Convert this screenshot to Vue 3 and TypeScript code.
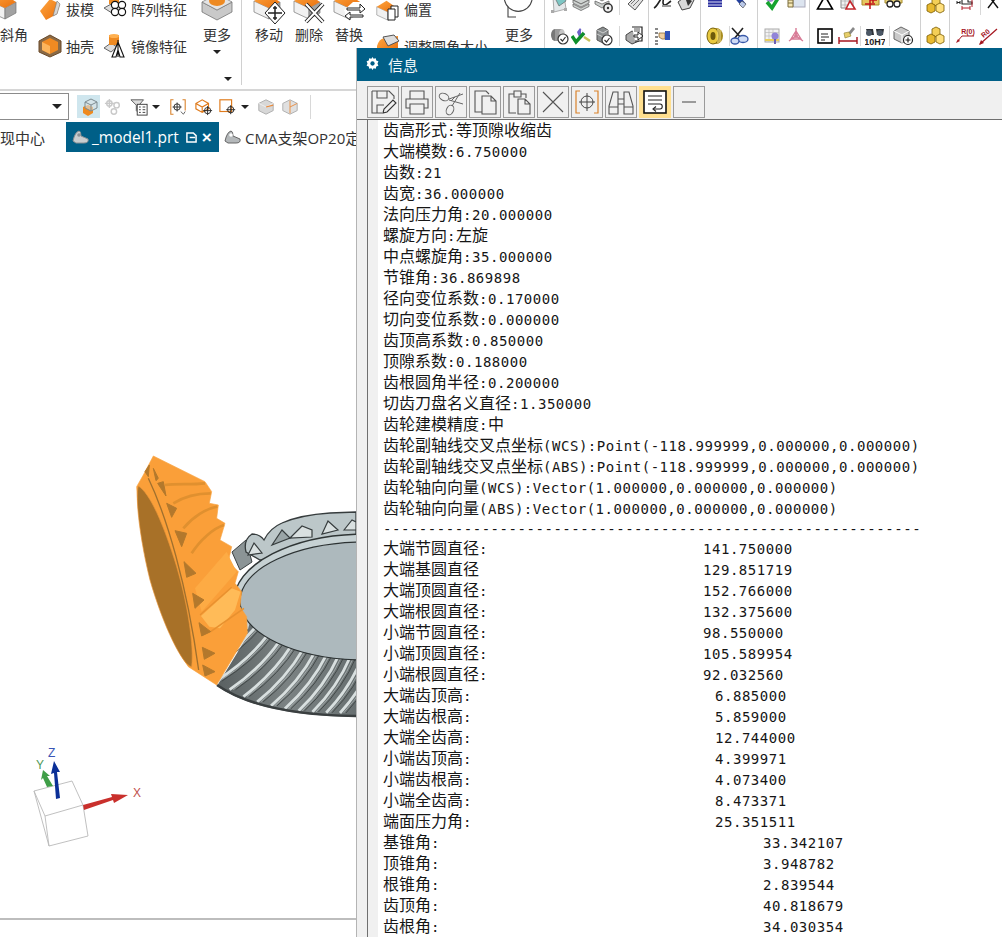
<script setup lang="ts">
interface Tok { s: string; cjk: boolean }
interface Mini { id?: string; ml: number; sep?: boolean }
interface MiniGroup { w: number; rows: Mini[][] }

const topLines: string[] = [
  '齿高形式:等顶隙收缩齿', '大端模数:6.750000', '齿数:21', '齿宽:36.000000',
  '法向压力角:20.000000', '螺旋方向:左旋', '中点螺旋角:35.000000', '节锥角:36.869898',
  '径向变位系数:0.170000', '切向变位系数:0.000000', '齿顶高系数:0.850000', '顶隙系数:0.188000',
  '齿根圆角半径:0.200000', '切齿刀盘名义直径:1.350000', '齿轮建模精度:中',
  '齿轮副轴线交叉点坐标(WCS):Point(-118.999999,0.000000,0.000000)',
  '齿轮副轴线交叉点坐标(ABS):Point(-118.999999,0.000000,0.000000)',
  '齿轮轴向向量(WCS):Vector(1.000000,0.000000,0.000000)',
  '齿轮轴向向量(ABS):Vector(1.000000,0.000000,0.000000)',
]
const dashes = '-'.repeat(60)
const table: [string, string, string][] = [
  ['大端节圆直径:', '141.750000', 'a'], ['大端基圆直径', '129.851719', 'a'],
  ['大端顶圆直径:', '152.766000', 'a'], ['大端根圆直径:', '132.375600', 'a'],
  ['小端节圆直径:', '98.550000', 'a'], ['小端顶圆直径:', '105.589954', 'a'],
  ['小端根圆直径:', '92.032560', 'a'], ['大端齿顶高:', '6.885000', 'b'],
  ['大端齿根高:', '5.859000', 'b'], ['大端全齿高:', '12.744000', 'b'],
  ['小端齿顶高:', '4.399971', 'b'], ['小端齿根高:', '4.073400', 'b'],
  ['小端全齿高:', '8.473371', 'b'], ['端面压力角:', '25.351511', 'b'],
  ['基锥角:', '33.342107', 'c'], ['顶锥角:', '3.948782', 'c'],
  ['根锥角:', '2.839544', 'c'], ['齿顶角:', '40.818679', 'c'],
  ['齿根角:', '34.030354', 'c'],
]
function tokens(line: string): Tok[] {
  const m = line.match(/[\u4e00-\u9fff]+|[^\u4e00-\u9fff]+/g) || []
  return m.map((s) => ({ s, cjk: /[\u4e00-\u9fff]/.test(s) }))
}

const miniGroups: MiniGroup[] = [
  { w: 104, rows: [
    [{ id: 'm1', ml: 4 }, { id: 'm2', ml: 2 }, { id: 'm3', ml: 3 }, { ml: 5, sep: true }, { id: 'm4', ml: 5 }],
    [{ id: 'n1', ml: 4 }, { id: 'n2', ml: 2 }, { id: 'n3', ml: 3 }, { ml: 5, sep: true }, { id: 'n4', ml: 5 }],
  ] },
  { w: 52, rows: [
    [{ id: 'm5', ml: 4 }, { id: 'm6', ml: 3 }],
    [{ id: 'n5', ml: 4 }],
  ] },
  { w: 57, rows: [
    [{ id: 'm7', ml: 4 }, { id: 'm8', ml: 4 }],
    [{ id: 'n6', ml: 4 }, { ml: 4, sep: true }, { id: 'n7', ml: -1 }],
  ] },
  { w: 52, rows: [
    [{ id: 'm9', ml: 5 }, { id: 'm10', ml: 3 }],
    [{ id: 'n8', ml: 5 }, { id: 'n9', ml: 3 }],
  ] },
  { w: 111, rows: [
    [{ id: 'm11', ml: 5 }, { id: 'm12', ml: 3 }, { id: 'm13', ml: 3 }, { id: 'm14', ml: 3 }],
    [{ id: 'n10', ml: 5 }, { id: 'n11', ml: 3 }, { ml: 2, sep: true }, { id: 'n12', ml: 4 }, { ml: 4, sep: true }, { id: 'n13', ml: 3 }],
  ] },
  { w: 29, rows: [
    [{ id: 'cubes', ml: 4 }],
    [{ id: 'cubes', ml: 4 }],
  ] },
  { w: 55, rows: [
    [{ id: 'm16', ml: 5 }, { ml: 5, sep: true }, { id: 'm17', ml: 2 }],
    [{ id: 'n15', ml: 5 }, { id: 'n16', ml: 3 }],
  ] },
]

// Gear tooth streaks on the lower grey flank, computed along the two rims.
const discY = (x: number) => 601 + 59 * Math.sqrt(Math.max(0, 1 - ((x - 366) / 126) ** 2))
const rimY = (x: number) => 716 - 31 * (Math.max(0, 356 - x) / 139) ** 3
const streaks = Array.from({ length: 11 }, (_, i) => {
  const t = i / 10
  const x0 = 256 + t * 118
  const x1 = x0 - (54 - t * 20)
  const y0 = discY(x0) - 3
  const y1 = rimY(x1) - 3
  const cx = (x0 + x1) / 2 + 6
  const cy = (y0 + y1) / 2 + 3
  return {
    light: `M${x0} ${y0}Q${cx} ${cy} ${x1} ${y1}`,
    thin: `M${x0 + 3.6} ${y0}Q${cx + 3.6} ${cy} ${x1 + 3.6} ${y1}`,
    dark: `M${x0 + 6} ${y0}Q${cx + 6} ${cy} ${x1 + 6} ${y1}`,
  }
})
</script>

<template>
  <div class="app">
    <svg class="defs" width="0" height="0">
      <defs>
        <linearGradient id="or" x1="0" y1="0" x2="1" y2="1"><stop offset="0" stop-color="#ffa640"/><stop offset="1" stop-color="#e96f0c"/></linearGradient>
        <linearGradient id="flank" x1="0" y1="0" x2="1" y2="0"><stop offset="0" stop-color="#596061"/><stop offset=".5" stop-color="#7b8283"/><stop offset="1" stop-color="#687071"/></linearGradient>
        <symbol id="fbox" viewBox="0 0 32 32">
          <path d="M1 13 16 20V31L1 24Z" fill="#f1f1f1" stroke="#777" stroke-width=".7"/>
          <path d="M16 20 27 14V25L16 31Z" fill="#a2a2a2" stroke="#777" stroke-width=".7"/>
          <path d="M1 13 14 5 27 14 16 20Z" fill="url(#or)"/>
        </symbol>
        <symbol id="m1" viewBox="0 0 20 20"><path d="M4 2 15 0 17 14 5 17Z" fill="#e4e8ea" stroke="#999" stroke-width=".8"/><path d="M6 3 13 -2 17 6 10 11Z" fill="#7dc6c4" stroke="#555" stroke-width=".6"/><rect x="2" y="15" width="3" height="3" fill="#aaa"/><rect x="15" y="13" width="3" height="3" fill="#aaa"/></symbol>
        <symbol id="m2" viewBox="0 0 20 20"><g fill="#cfd3d1" stroke="#666" stroke-width=".8"><path d="M2 5 10 1 18 5 10 9Z"/><path d="M2 9 10 13 18 9V11.500L10 15.500 2 11.500Z"/><path d="M2 5V8L10 12 18 8V5L10 9Z"/></g></symbol>
        <symbol id="m3" viewBox="0 0 20 20"><g fill="#c9cdcb" stroke="#666" stroke-width=".8"><path d="M1 2 8 -1 15 2 8 6Z"/><path d="M1 6 8 9 15 6V9L8 13 1 9Z"/></g><circle cx="14" cy="13" r="4.200" fill="#eee" stroke="#333" stroke-width="1.500"/><circle cx="14" cy="13" r="1.200" fill="#333"/></symbol>
        <symbol id="m4" viewBox="0 0 20 20"><path d="M3 9 11 1 17 -1 18 5 10 15Z" fill="#e4e4e4" stroke="#555"/><path d="M6 9 12 3M8 11 14 5" stroke="#777"/></symbol>
        <symbol id="m5" viewBox="0 0 20 20"><path d="M1 13C5 11 7 3 11 1 10 6 9 10 12 10 14 10 15 8 18 6" fill="none" stroke="#222" stroke-width="1.600"/><path d="M9 11 18 11" stroke="#999" stroke-width="2"/></symbol>
        <symbol id="m6" viewBox="0 0 20 20"><path d="M2 7 10 1 18 5 14 13 6 15Z" fill="#d8d8d8" stroke="#444"/><path d="M9 2 16 6 12 11Z" fill="#333"/></symbol>
        <symbol id="m7" viewBox="0 0 20 20"><rect x="3" y="-2" width="14" height="14" fill="#2b2f9d"/><path d="M3 1H17M3 4H17M3 7H17M3 10H17" stroke="#d9dcf5" stroke-width="1.200"/></symbol>
        <symbol id="m8" viewBox="0 0 20 20"><path d="M4 1 8 -2 17 9 13 12Z" fill="#24409f"/><path d="M13 6 17 9 14 13 10 9Z" fill="#b9c8e8" stroke="#444" stroke-width=".6"/></symbol>
        <symbol id="m9" viewBox="0 0 20 20"><circle cx="7" cy="3" r="4" fill="#a28bd6"/><path d="M4 7 9 13 17 0" fill="none" stroke="#16a32f" stroke-width="3.600"/></symbol>
        <symbol id="m10" viewBox="0 0 20 20"><rect x="7" y="2" width="12" height="10" fill="#dce4ef" stroke="#aab"/><path d="M2 2H7V12H2Z" fill="#f6e8b4" stroke="#7b6d3d"/><path d="M2 5H7M2 8H7" stroke="#7b6d3d"/><circle cx="11" cy="1" r="3" fill="#8e78cf"/></symbol>
        <symbol id="m11" viewBox="0 0 20 20"><path d="M10 1 17.500 14H2.500Z" fill="#fff" stroke="#000" stroke-width="1.600"/></symbol>
        <symbol id="m12" viewBox="0 0 20 20"><path d="M3-2H15V13H3Z" fill="#f1f1f1" stroke="#888"/><path d="M3 2H15M3 6H15M3 10H15M7-2V13M11-2V13" stroke="#aaa" stroke-width=".7"/><path d="M12 6 17 14H8Z" fill="#fff" stroke="#c2272d" stroke-width="1.600"/></symbol>
        <symbol id="m13" viewBox="0 0 20 20"><path d="M1-2H18V10H1Z" fill="#e6c660" stroke="#a98c2a"/><path d="M4 9H14M9 4V14M12 2V8M9 5H16" stroke="#c2151b" stroke-width="1.500"/></symbol>
        <symbol id="m14" viewBox="0 0 20 20"><path d="M1-2H18V8H1Z" fill="#e8d27a" stroke="#a98c2a"/><circle cx="6" cy="9" r="3" fill="#fff" stroke="#222" stroke-width="1.300"/><circle cx="13" cy="9" r="3" fill="#fff" stroke="#222" stroke-width="1.300"/></symbol>
        <symbol id="cubes" viewBox="0 0 20 20"><g stroke="#7a5b00" stroke-width=".8"><path d="M7 3 11 1 15 3V9L11 11 7 9Z" fill="#f4cf57"/><path d="M2 10 6 8 10 10V16L6 18 2 16Z" fill="#e8b92f"/><path d="M11 10 15 8 19 10V16L15 18 11 16Z" fill="#ffe07d"/></g></symbol>
        <symbol id="m16" viewBox="0 0 20 20"><path d="M7 7V1H13V7H17V9H7Z" fill="#fff" stroke="#222" stroke-width="1.100"/><path d="M2 6V9M5 6V9M2 7.500H5" stroke="#222"/><path d="M17 1V12M7 13H15M7 11V15M15 11V15" stroke="#b3202c"/></symbol>
        <symbol id="m17" viewBox="0 0 20 20"><path d="M5 0 15 13M15 0 5 13" stroke="#111" stroke-width="1.400"/></symbol>
        <symbol id="n1" viewBox="0 0 20 20"><ellipse cx="6" cy="9" rx="4" ry="6" fill="#777"/><rect x="6" y="3" width="7" height="12" fill="#9a9a9a"/><ellipse cx="13" cy="9" rx="3" ry="6" fill="#c5c5c5"/><circle cx="14" cy="13" r="5" fill="#fff" stroke="#333" stroke-width="1.200"/><path d="M11.500 13 13.500 15 16.500 11" fill="none" stroke="#333" stroke-width="1.200"/></symbol>
        <symbol id="n2" viewBox="0 0 20 20"><path d="M9 2 14 8 8 11 6 6Z" fill="#6d63c9"/><path d="M10 3 13 7 10 8Z" fill="#fff"/><path d="M1 10 5 16 13 7" fill="none" stroke="#0e8f2a" stroke-width="3.400"/><path d="M13 11 19 15" stroke="#c7c258" stroke-width="2.500"/></symbol>
        <symbol id="n3" viewBox="0 0 20 20"><path d="M3 4 9 1 14 4V14L9 17 3 14Z" fill="#8b8f90" stroke="#555"/><path d="M3 4 9 7 14 4M3 8 9 11 14 8" fill="none" stroke="#ddd" stroke-width=".8"/><circle cx="13" cy="14" r="5" fill="#fff" stroke="#333" stroke-width="1.200"/><path d="M10.500 14 12.500 16 15.500 12" fill="none" stroke="#333" stroke-width="1.200"/></symbol>
        <symbol id="n4" viewBox="0 0 20 20"><path d="M1 9 7 5 14 8V15L7 18 1 14Z" fill="#aaa" stroke="#444"/><path d="M7 1H17V15H10" fill="#fff" stroke="#222" stroke-width="1.200"/><path d="M9 9H13V6L18 10 13 14V11H9Z" fill="#fff" stroke="#222"/><path d="M9 3H15M9 5H15" stroke="#555"/></symbol>
        <symbol id="n5" viewBox="0 0 20 20"><path d="M2 3H5M2 7H5M2 11H5M2 15H5M2 18H5" stroke="#111"/><path d="M6 7H12V13H9L6 11Z" fill="#f2d0a0" stroke="#8a6a3a" stroke-width=".8"/><rect x="12" y="5" width="5" height="9" fill="#3153b8"/></symbol>
        <symbol id="n6" viewBox="0 0 20 20"><ellipse cx="11" cy="10" rx="7" ry="8" fill="#a88c20"/><ellipse cx="8" cy="10" rx="6" ry="8" fill="#e8c93f" stroke="#77620f"/><ellipse cx="8" cy="10" rx="2.500" ry="4" fill="#6e5b0c"/><path d="M13 3V17M15 4V16" stroke="#f2e08c"/></symbol>
        <symbol id="n7" viewBox="0 0 20 20"><path d="M3 2 14 14M14 2 5 13" stroke="#222" stroke-width="1.600"/><ellipse cx="14" cy="13" rx="5" ry="3.500" fill="#cfdcf5" stroke="#3858a8" stroke-width="1.300"/><ellipse cx="6" cy="15" rx="4" ry="3" fill="#cfdcf5" stroke="#3858a8" stroke-width="1.300"/></symbol>
        <symbol id="n8" viewBox="0 0 20 20"><rect x="2" y="3" width="14" height="13" fill="#f2f2f2" stroke="#aaa"/><path d="M2 6.500H16M2 10H16M6 3V16M10 3V16" stroke="#bbb" stroke-width=".7"/><path d="M2 14H16" stroke="#e9cf5a" stroke-width="2"/><circle cx="12" cy="10" r="3.500" fill="#9184d8"/><path d="M12 13V18" stroke="#6c60b5" stroke-width="2"/></symbol>
        <symbol id="n9" viewBox="0 0 20 20"><path d="M10 2V10M10 10 3 15M10 10 17 15M5 13 15 13 10 5Z" fill="none" stroke="#d87b96" stroke-width="1.400"/><circle cx="10" cy="10" r="2" fill="#d87b96"/></symbol>
        <symbol id="n10" viewBox="0 0 20 20"><rect x="3" y="3" width="14" height="14" fill="#fff" stroke="#000" stroke-width="1.600"/><path d="M6 8H13M6 11H14M6 14H10" stroke="#222"/></symbol>
        <symbol id="n11" viewBox="0 0 20 20"><path d="M10 7 15 1 17 3 12 9Z" fill="#888"/><path d="M6 7 11 6 13 10 7 12Z" fill="#e7cf6b" stroke="#8a7a2a" stroke-width=".6"/><path d="M1 11V18M19 11V18M1 15H19" stroke="#a5161f" stroke-width="1.400"/></symbol>
        <symbol id="n12" viewBox="0 0 20 20"><path d="M1 3H8L9 9H3ZM11 3H19L18 9H12Z" fill="#2c3036"/><circle cx="4" cy="7" r="3" fill="#4b5765"/><circle cx="15" cy="7" r="3" fill="#4b5765"/><text x="10" y="19" font-size="9" font-family="Liberation Sans" font-weight="700" text-anchor="middle" fill="#222">10H7</text></symbol>
        <symbol id="n13" viewBox="0 0 20 20" overflow="visible"><path d="M1 5 8 1 16 5V13L9 17 1 13Z" fill="#c9c9c9" stroke="#666"/><path d="M1 5 9 9 16 5M9 9V17" fill="none" stroke="#fff"/><circle cx="15" cy="14" r="4.500" fill="#fff" stroke="#222" stroke-width="1.200"/><path d="M12.500 14H17.500M15 11.500V16.500" stroke="#222" stroke-width="1.200"/></symbol>
        <symbol id="n15" viewBox="0 0 20 20"><text x="13" y="8" font-size="7" font-weight="700" font-family="Liberation Sans" text-anchor="middle" fill="#a5161f">R(0)</text><path d="M2 16 7 10H19" fill="none" stroke="#a5161f"/><path d="M1 17 5 15 3 13Z" fill="#a5161f"/></symbol>
        <symbol id="n16" viewBox="0 0 20 20"><path d="M2 18 19 3" stroke="#a5161f" stroke-width="1.200"/><path d="M1 19 6 17 3 14Z" fill="#a5161f"/><text x="9" y="9" font-size="7" font-weight="700" font-family="Liberation Sans" text-anchor="middle" transform="rotate(-40 9 9)" fill="#a5161f">R0</text></symbol>
      </defs>
    </svg>

    <header class="ribbon">
      <section class="group features">
        <div class="vtool chamfer">
          <svg class="big" viewBox="0 0 32 32"><use href="#fbox"/></svg>
          <span class="rlabel">斜角</span>
        </div>
        <div class="hcol col-b">
          <div class="htool"><svg class="mid" viewBox="0 0 24 24"><path d="M2 14 12 2 22 7 19 17 8 23Z" fill="url(#or)"/><path d="M19 4 22 7 19 17 15 19Z" fill="#d5d5d5" stroke="#777" stroke-width=".6"/></svg><span class="rlabel">拔模</span></div>
          <div class="htool"><svg class="mid" viewBox="0 0 24 24"><path d="M12 1 23 7V18L12 23 1 18V7Z" fill="#8a6a46" stroke="#6a4a2a"/><path d="M12 4 20 8V16L12 20 4 16V8Z" fill="#f08a22"/><path d="M4 8 12 12V20L4 16Z" fill="#fdb55c"/></svg><span class="rlabel">抽壳</span></div>
        </div>
        <div class="hcol col-c">
          <div class="htool"><svg class="mid" viewBox="0 0 24 24"><path d="M1 11 10 6 22 12 12 18Z" fill="#ddd" stroke="#666"/><rect x="6" y="-4" width="10" height="11" fill="#ee8a22"/><g fill="#fff" stroke="#111" stroke-width="1.200"><circle cx="12" cy="8" r="3.600"/><circle cx="19" cy="8" r="3.600"/><circle cx="12" cy="15" r="3.600"/><circle cx="19" cy="15" r="3.600"/></g></svg><span class="rlabel">阵列特征</span></div>
          <div class="htool"><svg class="mid" viewBox="0 0 24 24"><path d="M1 14 8 9 14 13 8 18Z" fill="#ddd" stroke="#666"/><rect x="6" y="1" width="10" height="10" fill="#ee8a22"/><ellipse cx="11" cy="2" rx="5" ry="2" fill="#ffb04f"/><path d="M15 6V23M15 8 9 23H13L15 16ZM15 8 21 23H17L15 16Z" fill="#fff" stroke="#111" stroke-width="1.100"/></svg><span class="rlabel">镜像特征</span></div>
        </div>
        <div class="vtool more">
          <svg class="big" viewBox="0 0 32 32"><path d="M1 14 16 22 31 14V24L16 32 1 24Z" fill="#c9c9c9" stroke="#666" stroke-width=".7"/><path d="M1 14 16 6 31 14 16 22Z" fill="#e4e4e4" stroke="#777" stroke-width=".7"/><ellipse cx="16" cy="13" rx="8" ry="5" fill="#ee8a22"/></svg>
          <span class="rlabel">更多</span>
          <span class="caret"></span>
        </div>
        <span class="caret launcher"></span>
      </section>

      <section class="group direct">
        <div class="vtool move">
          <svg class="big" viewBox="0 0 32 32"><use href="#fbox"/><path d="M22 14 32 25 22 36 12 25Z" fill="#fff" stroke="#222"/><path d="M22 18V32M15 25H29M20 20H24M20 30H24" stroke="#222" stroke-width="1.500"/></svg>
          <span class="rlabel">移动</span>
        </div>
        <div class="vtool move">
          <svg class="big" viewBox="0 0 32 32"><use href="#fbox"/><path d="M13 16 30 34M30 16 13 34" stroke="#222" stroke-width="4"/><path d="M13 16 30 34M30 16 13 34" stroke="#fff" stroke-width="2"/></svg>
          <span class="rlabel">删除</span>
        </div>
        <div class="vtool move">
          <svg class="big" viewBox="0 0 32 32"><use href="#fbox"/><path d="M20 14 32 14 32 28 14 30 11 22Z" fill="#fff"/><path d="M14 20H27V16L32 21 27 25V22H14ZM30 27H17V24L12 28 17 32V29H30Z" fill="#fff" stroke="#222"/></svg>
          <span class="rlabel">替换</span>
        </div>
        <div class="hcol col-o">
          <div class="htool"><svg class="mid" viewBox="0 0 24 24"><use href="#fbox" width="24" height="24"/><path d="M15 9H22V20H15Z" fill="#fff" stroke="#222"/><path d="M12 12H19V23H12Z" fill="#fff" stroke="#222"/></svg><span class="rlabel">偏置</span></div>
          <div class="htool"><svg class="mid" viewBox="0 0 24 24"><path d="M1 12Q3 5 8 4L22 2 22 14 10 20 1 18Z" fill="url(#or)"/><path d="M7 3 18 1 23 7 12 12Z" fill="#ddd" stroke="#555"/></svg><span class="rlabel wide">调整圆角大小</span></div>
        </div>
        <div class="vtool more2">
          <svg class="big" viewBox="0 0 32 32"><path d="M1.500 12A14 14 0 0 0 29 12" fill="none" stroke="#444" stroke-width="1.100"/><path d="M5 19V29H13" fill="none" stroke="#444" stroke-width="1.100"/></svg>
          <span class="rlabel">更多</span>
        </div>
      </section>

      <section v-for="(g, gi) in miniGroups" :key="gi" class="minigroup" :style="{ width: g.w + 'px' }">
        <div v-for="(r, ri) in g.rows" :key="ri" class="minirow">
          <template v-for="(it, ii) in r" :key="ii">
            <i v-if="it.sep" class="minisep" :style="{ marginLeft: it.ml + 'px' }"></i>
            <svg v-else class="mini" viewBox="0 0 20 20" :style="{ marginLeft: it.ml + 'px' }"><use :href="'#' + it.id"/></svg>
          </template>
        </div>
      </section>
    </header>

    <nav class="qbar">
      <div class="combo"><span class="caret"></span></div>
      <button class="qbtn on"><svg viewBox="0 0 20 20"><path d="M4 10 9 8 14 10V16L9 19 4 16Z" fill="#ef8a1f"/><path d="M6 5 12 2 18 5V11L12 14 6 11Z" fill="#d9e3e6" fill-opacity=".6" stroke="#7d8b90"/><path d="M6 5 12 8 18 5M12 8V14" fill="none" stroke="#7d8b90"/></svg></button>
      <svg class="qicon" viewBox="0 0 20 20"><g fill="none" stroke="#c9c9c9" stroke-width="1.600"><circle cx="6" cy="6" r="3"/><circle cx="14" cy="8" r="3"/><circle cx="11" cy="15" r="3"/><path d="M1 6H11M6 1V11"/></g></svg>
      <svg class="qicon filter" viewBox="0 0 20 20"><path d="M1 2H15L10 8V17L7 14V8Z" fill="#ddd" stroke="#555"/><rect x="8" y="7" width="11" height="12" fill="#fff" stroke="#333"/><path d="M10 10H12M14 10H17M10 13H12M14 13H17M10 16H12M14 16H17" stroke="#333"/></svg>
      <span class="caret q1"></span>
      <svg class="qicon sel" viewBox="0 0 20 20"><path d="M5 2H2V18H5M15 2H18V14" fill="none" stroke="#d9822b" stroke-width="1.200"/><circle cx="9" cy="10" r="3.500" fill="none" stroke="#222"/><path d="M4 10H14M9 5V15" stroke="#222"/><path d="M13 15 16 18 18 15" fill="none" stroke="#555"/></svg>
      <svg class="qicon sel2" viewBox="0 0 20 20"><path d="M1 6 8 2 15 6V12L8 16 1 12ZM1 6 8 10 15 6M8 10V16" fill="#fff" stroke="#e07b1c" stroke-width="1.300"/><circle cx="14" cy="14" r="3.500" fill="none" stroke="#222"/><path d="M9 14H19M14 9V19" stroke="#222"/></svg>
      <svg class="qicon sel3" viewBox="0 0 20 20"><rect x="1" y="2" width="13" height="13" fill="#fff" stroke="#e07b1c" stroke-width="1.300"/><circle cx="13" cy="13" r="3.500" fill="none" stroke="#222"/><path d="M8 13H18M13 8V18" stroke="#222"/></svg>
      <span class="caret q2"></span>
      <svg class="qicon sel4" viewBox="0 0 20 20"><path d="M2 6 10 2 18 6V14L10 18 2 14Z" fill="#d8d8d8" stroke="#aaa"/><path d="M2 6 10 10 18 6" fill="none" stroke="#f0f0f0"/><path d="M10 10 18 8" stroke="#e98a3b" stroke-width="1.400"/></svg>
      <svg class="qicon sel5" viewBox="0 0 20 20"><path d="M2 6 10 2 18 6V14L10 18 2 14Z" fill="#e0e0e0" stroke="#aaa"/><path d="M10 3V17M10 10 18 6" stroke="#e98a3b"/></svg>
      <i class="qsep"></i>
    </nav>

    <div class="tabs">
      <span class="tab first">现中心</span>
      <span class="tab active">
        <svg class="tabicon" viewBox="0 0 18 18"><path d="M1 13Q3 4 7 3 9 3 9 8L16 11Q17 15 12 15H4Z" fill="#c9cdcf" stroke="#8b9094"/><circle cx="7" cy="7" r="1.800" fill="#8b9094"/></svg>
        <span class="tabtext">_model1.prt</span>
        <svg class="tabsave" viewBox="0 0 12 12"><path d="M1 1H8L11 4V11H1Z" fill="none" stroke="#fff" stroke-width="1.600"/><path d="M4 6H10" stroke="#fff" stroke-width="1.600"/></svg>
        <b class="tabclose">×</b>
      </span>
      <span class="tab other">
        <svg class="tabicon" viewBox="0 0 18 18"><path d="M1 13Q3 4 7 3 9 3 9 8L16 11Q17 15 12 15H4Z" fill="#b4b8ba" stroke="#666"/><circle cx="7" cy="7" r="1.800" fill="#fff"/></svg>
        <span class="tabtext dark">CMA支架OP20定位</span>
      </span>
    </div>

    <main class="viewport">
      <svg class="scene" viewBox="0 152 356 766" preserveAspectRatio="xMinYMin slice">
        <!-- grey gear -->
        <path d="M232 552 246 540 252 562 240 570Z" fill="#8b9496" stroke="#3b4142"/>
        <path d="M246 552Q243 540 252 534 260 534 264 540 270 528 282 523 300 515 330 513L356 512V560H260Z" fill="#bcc7c9" stroke="#363c3d" stroke-width="1.300"/>
        <g fill="#d9e0e0" stroke="#363c3d" stroke-width="1.200">
          <path d="M248 555 254 543 262 553Z"/>
          <path d="M272 545 282 530 290 538Z" fill="#9aa5a7"/>
          <path d="M290 538 302 526 312 530 312 537Z"/>
          <path d="M322 534 328 521 338 530Z"/>
          <path d="M344 530 352 520 356 522V530Z"/>
        </g>
        <ellipse cx="366" cy="601" rx="132" ry="67" fill="#c6d1d3" stroke="#2f3535" stroke-width="1.500"/>
        <path d="M217 686C240 702 280 716 356 717V622H250L245 640Z" fill="url(#flank)"/>
        <g fill="none">
          <template v-for="(s, i) in streaks" :key="i">
            <path :d="s.dark" stroke="#434949" stroke-width="1"/>
            <path :d="s.thin" stroke="#aeb6b6" stroke-width=".8"/>
            <path :d="s.light" stroke="#d8dfdf" stroke-width="2.800"/>
          </template>
        </g>
        <path d="M217 685C240 701 280 715 356 716" fill="none" stroke="#3a3f40" stroke-width="2.500"/>
        <ellipse cx="366" cy="601" rx="126" ry="59" fill="#adb9bd" stroke="#2c3233" stroke-width="1.200"/>
        <!-- orange gear, traced in a 3× frame -->
        <g transform="translate(120 440) scale(.3333)">
          <path d="M100 48 255 125 275 155 268 190 295 195 290 235 315 250 300 300 335 320 325 365 355 395 345 430 365 455 360 500 380 530 382 580 290 735 205 680C120 560 60 330 50 140L70 105Z" fill="#fa9f39" stroke="#f8a544" stroke-width="2" stroke-linejoin="round"/>
          <g fill="none" stroke="#e0902f" stroke-width="8">
            <path d="M135 135C170 130 215 135 255 130"/>
            <path d="M160 190C200 165 240 160 272 160"/>
            <path d="M190 265C220 230 260 205 292 200"/>
            <path d="M215 340C240 300 280 265 312 255"/>
          </g>
          <path d="M225 445 320 335 350 395 245 515Z" fill="#fdab44"/>
          <path d="M243 528 335 445 362 455 345 510 300 565 268 560Z" fill="#ffbb58"/>
          <path d="M240 525 335 442" stroke="#e8912f" stroke-width="4" fill="none"/>
          <path d="M272 575 372 505" stroke="#e8912f" stroke-width="5" fill="none"/>
          <path d="M55 138C90 160 130 250 170 380 205 500 222 620 215 680 190 680 130 560 90 420 60 300 45 170 55 138Z" fill="#a87128" stroke="#e8953a" stroke-width="2"/>
          <path d="M85 115C140 230 200 430 236 690" fill="none" stroke="#a0702e" stroke-width="4"/>
          <g fill="#b3782c" stroke="#b3782c" stroke-width="3" stroke-linejoin="round">
            <path d="M75 95 88 75 85 110Z"/><path d="M100 85 115 115 108 122Z"/>
            <path d="M113 130 130 125 138 168Z"/><path d="M140 190 170 205 155 232Z"/>
            <path d="M165 272 200 280 185 320Z"/><path d="M192 365 228 400 200 412Z"/>
            <path d="M218 460 252 480 225 505Z"/><path d="M237 548 272 575 245 588Z"/>
            <path d="M247 622 285 640 253 658Z"/><path d="M248 675 285 695 255 708Z"/>
          </g>
        </g>
        <!-- triad -->
        <g fill="none" stroke="#b9b9b9" stroke-width=".9">
          <path d="M34 791 72 781 83 805 45 816ZM34 791 49 846 45 816M83 805 88 836 49 846"/>
        </g>
        <path d="M83 805 112 797 111 794 128 795 114 803 113 800 84 810Z" fill="#c9302c"/>
        <path d="M47 787 43 778 41 780 43 770 50 776 47 776 53 786Z" fill="#3f9e47"/>
        <path d="M56 799 54 773 51 774 54 761 60 772 57 772 60 798Z" fill="#0a2f97"/>
        <text x="48" y="757" class="axis az">Z</text>
        <text x="36" y="769" class="axis ay">Y</text>
        <text x="133" y="797" class="axis ax">X</text>
      </svg>
    </main>
    <footer class="statusline"></footer>

    <aside class="infowin">
      <div class="titlebar">
        <svg class="gear" viewBox="0 0 16 16"><path d="M8 1 9.200 3 11.500 2.500 12 4.800 14.300 5.500 13.300 8 14.300 10.500 12 11.200 11.500 13.500 9.200 13 8 15 6.800 13 4.500 13.500 4 11.200 1.700 10.500 2.700 8 1.700 5.500 4 4.800 4.500 2.500 6.800 3Z" fill="#fff"/><circle cx="8" cy="8" r="2.300" fill="#005f87"/></svg>
        <span class="wintitle">信息</span>
      </div>
      <div class="wintools">
        <button class="wbtn"><svg viewBox="0 0 30 30"><path d="M4 4H21L26 9V12M4 4V26H14M9 4V11H19V4M9 26V18H16" fill="none" stroke="#555" stroke-width="1.100"/><path d="M15 26 16 22 25 13 28 16 19 25Z" fill="none" stroke="#333" stroke-width="1.100"/></svg></button>
        <button class="wbtn"><svg viewBox="0 0 30 30"><path d="M8 12V4H22V12M8 21H4V12H26V21H22M8 17H22V27H8Z" fill="none" stroke="#555" stroke-width="1.100"/></svg></button>
        <button class="wbtn"><svg viewBox="0 0 30 30"><g fill="none" stroke="#666" stroke-width="1"><ellipse cx="8" cy="10" rx="5" ry="3.500" transform="rotate(25 8 10)"/><path d="M13 12 27 7M13 13 27 17"/><ellipse cx="14" cy="23" rx="3.500" ry="5" transform="rotate(25 14 23)"/><path d="M16 19 24 6M15 14 19 10"/></g></svg></button>
        <button class="wbtn"><svg viewBox="0 0 30 30"><path d="M12 25H5V4H16L19 7M12 9H21L26 14V27H12ZM21 9V14H26" fill="none" stroke="#555" stroke-width="1.100"/></svg></button>
        <button class="wbtn"><svg viewBox="0 0 30 30"><path d="M12 26H5V7H10V4H17V7H22V11M10 7V10H17V7M14 12H21L26 17V27H14ZM21 12V17H26" fill="none" stroke="#555" stroke-width="1.100"/></svg></button>
        <button class="wbtn"><svg viewBox="0 0 30 30"><path d="M5 5 25 25M25 5 5 25" stroke="#555" stroke-width="1.100"/></svg></button>
        <button class="wbtn"><svg viewBox="0 0 30 30"><path d="M8 4H4V26H8M22 4H26V26H22" fill="none" stroke="#d9822b" stroke-width="1.200"/><circle cx="15" cy="15" r="6" fill="none" stroke="#444"/><path d="M15 6V24M7 15H23" stroke="#444"/></svg></button>
        <button class="wbtn"><svg viewBox="0 0 30 30"><path d="M7 5H12V27H3V19ZM18 5H23L27 19V27H18ZM12 12H18M12 17H18M3 20H12M18 20H27" fill="none" stroke="#555" stroke-width="1.100"/></svg></button>
        <button class="wbtn hot"><svg viewBox="0 0 30 30"><rect x="4" y="4" width="22" height="22" fill="#fff" stroke="#111" stroke-width="1.600"/><path d="M8 9H22M8 13H22M8 17H20C23 17 23 22 20 22H14" fill="none" stroke="#222" stroke-width="1.100"/><path d="M16 19.500 13 22 16 24.500" fill="none" stroke="#222" stroke-width="1.100"/></svg></button>
        <button class="wbtn"><svg viewBox="0 0 30 30"><path d="M8 15H22" stroke="#555" stroke-width="1.100"/></svg></button>
      </div>
      <div class="textframe">
        <div class="gutter"></div>
        <div class="textbody">
          <div v-for="(l, i) in topLines" :key="i" class="line">
            <span v-for="(t, j) in tokens(l)" :key="j" :class="t.cjk ? 'cjk' : 'lat'">{{ t.s }}</span>
          </div>
          <div class="line dash"><span class="lat">{{ dashes }}</span></div>
          <div v-for="r in table" :key="r[0]" class="line tr" :class="'col-' + r[2]">
            <span class="cjkcell">
              <span v-for="(t, j) in tokens(r[0])" :key="j" :class="t.cjk ? 'cjk' : 'lat'">{{ t.s }}</span>
            </span>
            <span class="lat">{{ r[1] }}</span>
          </div>
        </div>
      </div>
    </aside>
  </div>
</template>

<style scoped>
.app { position: relative; width: 1002px; height: 937px; overflow: hidden; display: flex; flex-direction: column; background: #fff; color: #333; font-family: "Noto Sans CJK SC", "Noto Sans", sans-serif; }
.defs { position: absolute; }
button { padding: 0; font: inherit; }

.ribbon { display: flex; height: 91px; flex: none; overflow: hidden; border-bottom: 2px solid #d6d6d6; box-sizing: border-box; }
.group { display: flex; position: relative; height: 85px; flex: none; box-sizing: content-box; }
.features { width: 241px; border-right: 1px solid #d0d0d0; }
.direct { padding-right: 9px; border-right: 1px solid #d0d0d0; height: 85px; }
.rlabel { font-size: 14px; line-height: 20px; white-space: nowrap; color: #333; }
.rlabel.wide { width: 84px; }
.big { width: 32px; height: 32px; flex: none; overflow: visible; }
.mid { width: 24px; height: 24px; flex: none; overflow: visible; }
.vtool { display: flex; flex-direction: column; align-items: center; margin-top: -12px; width: 32px; flex: none; }
.vtool .rlabel { margin-top: 4px; }
.chamfer { width: 28px; margin-right: 10px; align-items: flex-start; }
.chamfer .big { margin-left: -11px; }
.more { margin-left: 14px; }
.more .caret { margin-top: 6px; }
.move { margin-left: 8px; }
.move:first-child { margin-left: 11px; }
.more2 { margin-left: 15px; }
.hcol { display: flex; flex-direction: column; margin-top: -10px; flex: none; }
.col-b { width: 65px; }
.col-c { width: 84px; }
.col-o { margin-left: 11px; }
.htool { display: flex; align-items: center; gap: 4px; height: 37px; }
.caret { display: inline-block; width: 0; height: 0; border-left: 4px solid transparent; border-right: 4px solid transparent; border-top: 4px solid #222; }
.launcher { position: absolute; left: 224px; top: 77px; }

.minigroup { flex: none; margin-top: -5px; border-right: 1px solid #d0d0d0; height: 90px; box-sizing: border-box; }
.minigroup:last-child { border-right: none; }
.minirow { display: flex; align-items: center; height: 20px; margin-bottom: 11px; }
.mini { width: 20px; height: 20px; flex: none; overflow: visible; }
.minisep { display: block; width: 1px; height: 20px; background: #d8d8d8; flex: none; margin-right: 0; }

.qbar { display: flex; align-items: center; height: 31px; flex: none; }
.combo { width: 68px; height: 25px; border: 1px solid #8b8b8b; border-left: none; box-sizing: content-box; display: flex; align-items: center; justify-content: flex-end; padding-right: 0; background: #fff; }
.combo .caret { margin-right: 6px; border-left-width: 5px; border-right-width: 5px; border-top-width: 5px; }
.qbtn { width: 23px; height: 23px; margin-left: 8px; border: none; background: #cfe6ee; display: flex; align-items: center; justify-content: center; }
.qbtn svg { width: 20px; height: 20px; }
.qicon { width: 18px; height: 18px; flex: none; overflow: visible; margin-left: 4px; }
.filter { margin-left: 8px; }
.q1 { margin-left: 4px; }
.sel { margin-left: 9px; }
.sel2 { margin-left: 8px; }
.sel3 { margin-left: 6px; }
.q2 { margin-left: 4px; }
.sel4 { margin-left: 8px; }
.sel5 { margin-left: 6px; }
.qsep { display: block; width: 1px; height: 24px; background: #d8d8d8; margin-left: 11px; }

.tabs { display: flex; height: 30px; flex: none; align-items: stretch; }
.tab { display: flex; align-items: center; font-size: 15px; }
.first { width: 66px; color: #333; font-size: 15px; white-space: nowrap; }
.active { width: 153px; background: #005f87; padding-left: 6px; box-sizing: border-box; }
.tabicon { width: 18px; height: 18px; flex: none; }
.tabtext { margin-left: 2px; font-family: "Open Sans", "Noto Sans CJK SC", sans-serif; font-size: 15.5px; color: #fff; white-space: nowrap; }
.tabtext.dark { color: #333; font-size: 15px; margin-left: 3px; }
.tabsave { width: 11px; height: 11px; margin-left: 7px; flex: none; }
.tabclose { color: #fff; font-family: "Liberation Sans", sans-serif; font-size: 17px; font-weight: 700; margin-left: 5px; line-height: 1; }
.other { padding-left: 5px; }

.viewport { flex: 1; position: relative; min-height: 0; overflow: hidden; }
.scene { display: block; width: 356px; height: 766px; }
.axis { font-family: "Liberation Sans", sans-serif; font-size: 12px; }
.az { fill: #3a55b5; }
.ay { fill: #4e9a58; }
.ax { fill: #c0504d; }
.statusline { height: 19px; flex: none; border-top: 2px solid #bdbdbd; box-sizing: border-box; }

.infowin { position: absolute; left: 356px; top: 48px; right: 0; bottom: 0; display: flex; flex-direction: column; background: #f0f0f0; border-left: 1px solid #b4b4b4; overflow: hidden; }
.titlebar { height: 33px; flex: none; background: #005f87; display: flex; align-items: center; padding-left: 8px; }
.gear { width: 15px; height: 15px; flex: none; margin-top: -2px; }
.wintitle { margin-left: 8px; color: #f0f6f9; font-size: 15px; line-height: 33px; }
.wintools { height: 39px; flex: none; display: flex; gap: 2px; padding: 5px 0 0 10px; box-sizing: border-box; background: #f0f0f0; border-bottom: 1px solid #6f6f6f; }
.wbtn { width: 32px; height: 32px; border: 1px solid #9a9a9a; background: #f0f0f0; display: flex; align-items: center; justify-content: center; box-sizing: border-box; }
.wbtn svg { width: 30px; height: 30px; }
.wbtn.hot { background: #ffdf8f; border-color: #ffdf8f; }
.textframe { flex: 1; min-height: 0; display: flex; margin-left: 10px; border-left: 1px solid #6f6f6f; overflow: hidden; }
.gutter { width: 10px; background: #f0f0f0; flex: none; }
.textbody { flex: 1; background: #fff; padding-left: 5px; margin-top: 0; overflow: hidden; color: #161616; }
.line { height: 21px; line-height: 21px; white-space: pre; }
.line:first-child { margin-top: -1px; }
.cjk { font-family: "Noto Sans CJK SC", sans-serif; font-size: 16px; }
.lat { font-family: "DejaVu Sans Mono", monospace; font-size: 14px; letter-spacing: .54px; }
.dash { height: 19px; line-height: 19px; }
.tr { display: flex; align-items: baseline; }
.cjkcell { flex: none; }
.col-a .cjkcell { width: 320px; }
.col-b .cjkcell { width: 332px; }
.col-c .cjkcell { width: 380px; }
</style>

<style>
html, body { margin: 0; background: #fff; }
</style>
